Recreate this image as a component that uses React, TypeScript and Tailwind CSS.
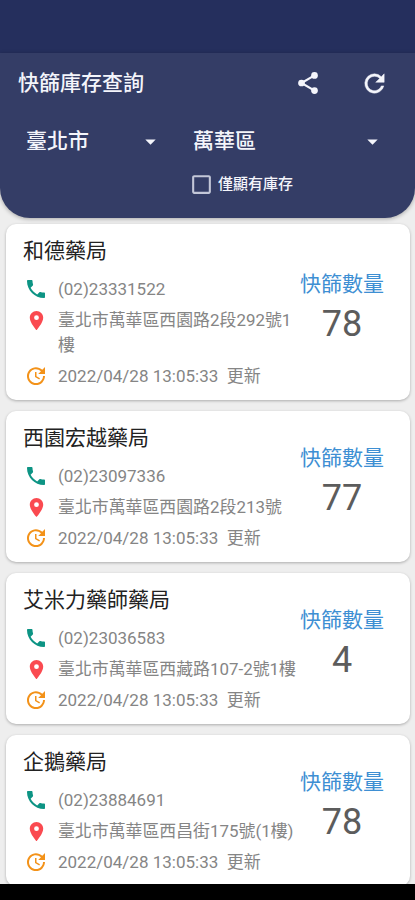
import {
  MdArrowDropDown,
  MdCheckBoxOutlineBlank,
  MdLocationOn,
  MdUpdate,
} from "react-icons/md";

type Pharmacy = {
  name: string;
  phone: string;
  address: string;
  updated: string;
  count: number;
};

const pharmacies: Pharmacy[] = [
  { name: "和德藥局", phone: "(02)23331522", address: "臺北市萬華區西園路2段292號1樓", updated: "2022/04/28 13:05:33", count: 78 },
  { name: "西園宏越藥局", phone: "(02)23097336", address: "臺北市萬華區西園路2段213號", updated: "2022/04/28 13:05:33", count: 77 },
  { name: "艾米力藥師藥局", phone: "(02)23036583", address: "臺北市萬華區西藏路107-2號1樓", updated: "2022/04/28 13:05:33", count: 4 },
  { name: "企鵝藥局", phone: "(02)23884691", address: "臺北市萬華區西昌街175號(1樓)", updated: "2022/04/28 13:05:33", count: 78 },
];

function ShareIcon({ className }: { className: string }) {
  return (
    <svg viewBox="0 0 24 24" className={className} fill="none" stroke="currentColor" strokeWidth="2">
      <path d="M18 5 6 12l12 7" />
      <g fill="currentColor" stroke="none">
        <circle cx="18" cy="5" r="3.1" />
        <circle cx="6" cy="12" r="3.1" />
        <circle cx="18" cy="19" r="3.1" />
      </g>
    </svg>
  );
}

function RefreshIcon({ className }: { className: string }) {
  return (
    <svg viewBox="0 0 24 24" className={className} fill="currentColor" stroke="currentColor" strokeWidth="0.4">
      <path d="M17.65 6.35A7.96 7.96 0 0 0 12 4a8 8 0 1 0 7.73 10h-2.08A6 6 0 1 1 12 6c1.66 0 3.14.69 4.22 1.78L13 11h7V4z" />
    </svg>
  );
}

function PhoneIcon({ className }: { className: string }) {
  return (
    <svg viewBox="0 0 24 24" className={className} fill="currentColor">
      <path d="M6.62 10.79c1.44 2.83 3.76 5.14 6.59 6.59l2.2-2.2c.27-.27.67-.36 1.02-.24 1.12.37 2.33.57 3.57.57.55 0 1 .45 1 1V20c0 .55-.45 1-1 1-9.39 0-17-7.61-17-17 0-.55.45-1 1-1h3.5c.55 0 1 .45 1 1 0 1.25.2 2.45.57 3.57.11.35.03.74-.25 1.02l-2.2 2.2z" />
    </svg>
  );
}

function Header() {
  return (
    <header className="h-[165px] shrink-0 rounded-b-[30px] bg-[#343d66] text-[#f4f5fb] shadow-[0_1px_4px_rgba(0,0,0,0.3)]">
      <div className="flex h-[60px] items-center pl-[18px] pr-[26px]">
        <h1 className="flex-1 text-[21px] font-medium leading-none">快篩庫存查詢</h1>
        <ShareIcon className="mr-[39px] size-[26px]" />
        <RefreshIcon className="size-[29px]" />
      </div>
      <div className="flex h-[57px] items-center">
        <div className="flex w-[168px] items-center justify-between pl-[26px] pr-[5px] text-[21px] font-medium">
          <span>臺北市</span>
          <MdArrowDropDown className="size-[25px]" />
        </div>
        <div className="flex flex-1 items-center justify-between pl-[25px] pr-[30px] text-[21px] font-medium">
          <span>萬華區</span>
          <MdArrowDropDown className="size-[25px]" />
        </div>
      </div>
      <div className="flex h-[28px] items-center gap-[4px] pl-[189px]">
        <MdCheckBoxOutlineBlank className="size-[25px] text-[#c3c7d8]" />
        <span className="text-[15px] font-medium leading-none">僅顯有庫存</span>
      </div>
    </header>
  );
}

function PharmacyCard({ item }: { item: Pharmacy }) {
  return (
    <article className="flex shrink-0 items-center rounded-[10px] bg-white shadow-[0_1px_3px_rgba(0,0,0,0.28)]">
      <div className="w-[294px] pb-[11px] pl-[17px] pt-[11px] text-[17px] leading-[25px] text-[#858585]">
        <h2 className="mb-[10px] text-[21px] leading-[32px] text-[#222222]">{item.name}</h2>
        <div className="flex h-[28px] items-start gap-[10px] pl-[1px]">
          <PhoneIcon className="size-[24px] shrink-0 text-[#0d9484]" />
          <span>{item.phone}</span>
        </div>
        <div className="flex items-start gap-[10px] pb-[6px] pl-[1px] pt-[3px]">
          <MdLocationOn className="mx-[0.5px] mt-[0.5px] size-[23px] shrink-0 text-[#fa4a50]" />
          <span className="-mr-3 min-w-0 flex-1 break-all text-[16.9px]">{item.address}</span>
        </div>
        <div className="flex items-start gap-[10px] pl-[1px]">
          <MdUpdate className="size-[24px] shrink-0 text-[#f39219]" />
          <span>{item.updated}&nbsp; 更新</span>
        </div>
      </div>
      <div className="flex flex-1 flex-col items-center pb-[9px] pl-[9px] pr-[26px]">
        <span className="whitespace-nowrap text-[21px] leading-[30px] text-[#3e8fd3]">快篩數量</span>
        <span className="mt-[2px] text-[36px] leading-[46px] text-[#5c5c5c]">{item.count}</span>
      </div>
    </article>
  );
}

export default function App() {
  return (
    <div className="flex h-[900px] w-full flex-col overflow-hidden bg-[#eeeeee] font-['Roboto','Noto_Sans_CJK_TC',sans-serif]">
      <div className="h-[53px] shrink-0 bg-[#252f5d]" />
      <Header />
      <main className="flex min-h-0 flex-1 flex-col gap-[11px] overflow-hidden pl-[6px] pr-[5px] pt-[6px]">
        {pharmacies.map((item) => (
          <PharmacyCard key={item.name} item={item} />
        ))}
      </main>
      <div className="h-[16px] shrink-0 bg-black" />
    </div>
  );
}
